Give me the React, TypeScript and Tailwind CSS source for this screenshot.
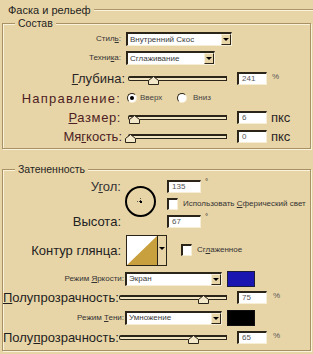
import React from 'react';

const U = ({ children }: { children: React.ReactNode }) => (
  <span className="underline underline-offset-[1px] decoration-[1px]">{children}</span>
);

function Field({ value, className = 'w-[30px]' }: { value: string; className?: string }) {
  return (
    <div
      className={`flex h-[13px] items-center border-t-2 border-l-2 border-b border-r border-t-[#2b2418] border-l-[#2b2418] border-b-[#f7eed6] border-r-[#f7eed6] bg-white pl-[3px] text-[8px] leading-none text-[#555] ${className}`}
    >
      {value}
    </div>
  );
}

function Arrow() {
  return <div className="h-0 w-0 border-x-[3px] border-t-[3px] border-x-transparent border-t-black" />;
}

function Select({ value, className }: { value: string; className: string }) {
  return (
    <div
      className={`flex h-[14px] items-center border-t-2 border-l-2 border-b border-r border-t-[#2b2418] border-l-[#2b2418] border-b-[#f7eed6] border-r-[#f7eed6] bg-white pl-[2px] ${className}`}
    >
      <span className="flex-1 text-[8px] leading-none text-[#3a3a3a]">{value}</span>
      <div className="flex h-[11px] w-[10px] items-center justify-center border border-t-[#f7eed6] border-l-[#f7eed6] border-b-[#2b2418] border-r-[#2b2418] bg-[#e8d5a7]">
        <Arrow />
      </div>
    </div>
  );
}

function Slider({ className, thumb }: { className: string; thumb: string }) {
  return (
    <div className={`relative h-[5px] ${className}`}>
      <div className="h-full rounded-l-[2px] border border-t-2 border-[#2b2418] bg-[#f1e4c2]" />
      <svg className={`absolute top-0 ${thumb}`} width="11" height="9" viewBox="0 0 11 9">
        <path d="M5.5 0.5 L10.5 4.5 V8.5 H0.5 V4.5 Z" fill="#f4e8ca" stroke="#2b2418" strokeWidth="1" />
      </svg>
    </div>
  );
}

function Radio({ on }: { on?: boolean }) {
  return (
    <div className="flex h-[10px] w-[10px] items-center justify-center rounded-full border border-t-[#2b2418] border-l-[#2b2418] border-b-[#f7eed6] border-r-[#f7eed6] bg-white">
      {on && <div className="h-[4px] w-[4px] rounded-full bg-black" />}
    </div>
  );
}

function Check() {
  return (
    <div className="h-[12px] w-[11px] border-t-2 border-l-2 border-b border-r border-t-[#2b2418] border-l-[#2b2418] border-b-[#f7eed6] border-r-[#f7eed6] bg-white" />
  );
}

const box =
  'ml-[2px] w-[309px] border border-[#a89167] shadow-[inset_1px_1px_0_#fbf2da,1px_1px_0_#fbf2da]';
const legend = 'ml-[12px] bg-[#e8d5a7] px-[3px] text-[10.5px] leading-[13px] text-[#1e1e1e]';
const big = 'text-right whitespace-nowrap text-[13px] leading-none';
const small = 'text-right whitespace-nowrap text-[8px] leading-none text-[#333]';

export default function App() {
  return (
    <div className="h-[354px] w-[313px] overflow-hidden bg-[#e8d5a7] font-['Liberation_Sans',Arial,sans-serif] text-[#222]">
      {/* заголовок */}
      <div className="flex h-[17px] items-center pl-[8px] pt-[3px]">
        <span className="text-[11px] leading-none text-[#1e1e1e]">Фаска и рельеф</span>
        <div className="ml-[3px] h-[2px] flex-1 border-t border-b border-t-[#ad976c] border-b-[#fbf2da]" />
      </div>

      {/* Состав */}
      <fieldset className={`${box} pb-[2px]`}>
        <legend className={legend}>Состав</legend>

        <div className="flex h-[18px] items-center">
          <div className={`w-[118px] ${small}`}>
            Стил<U>ь</U>:
          </div>
          <Select value="Внутренний Скос" className="ml-[5px] w-[106px]" />
        </div>

        <div className="flex h-[20px] items-center">
          <div className={`w-[118px] ${small}`}>
            Техни<U>к</U>а:
          </div>
          <Select value="Сглаживание" className="ml-[5px] w-[89px]" />
        </div>

        <div className="flex h-[20px] items-center">
          <div className={`w-[122px] ${big} text-[#2a2626]`}>
            <U>Г</U>лубина:
          </div>
          <Slider className="ml-[3px] w-[99px]" thumb="left-[20px]" />
          <Field value="241" className="ml-[10px] w-[30px]" />
          <span className="ml-[5px] self-start pt-[5px] text-[8px] leading-none text-[#555]">%</span>
        </div>

        <div className="flex h-[20px] items-center">
          <div className={`w-[118px] ${big} tracking-[1.2px] text-[#4d1e24]`}>Направление:</div>
          <div className="ml-[6px] flex w-[50px] items-center">
            <Radio on />
            <span className="ml-[3px] text-[8px] leading-none text-[#444]">Вверх</span>
          </div>
          <Radio />
          <span className="ml-[6px] text-[8px] leading-none text-[#444]">Вниз</span>
        </div>

        <div className="flex h-[19px] items-center">
          <div className={`w-[118px] ${big} tracking-[0.6px] text-[#4d1e24]`}>
            <U>Р</U>азмер:
          </div>
          <Slider className="ml-[7px] w-[99px]" thumb="left-[1px]" />
          <Field value="6" className="ml-[10px] w-[30px]" />
          <span className="ml-[4px] text-[13px] leading-none text-[#2a2626]">пкс</span>
        </div>

        <div className="flex h-[19px] items-center">
          <div className={`w-[119px] ${big} text-[#4d1e24]`}>
            Мя<U>г</U>кость:
          </div>
          <Slider className="ml-[6px] w-[99px]" thumb="left-[-3px]" />
          <Field value="0" className="ml-[10px] w-[30px]" />
          <span className="ml-[4px] text-[13px] leading-none text-[#2a2626]">пкс</span>
        </div>
      </fieldset>

      {/* Затененность */}
      <fieldset className={`${box} mt-[14px] pb-[3px]`}>
        <legend className={legend}>Затененность</legend>

        <div className="grid grid-cols-[118px_46px_1fr] grid-rows-[18px_17px_18px] pt-[1px]">
          <div className={`${big} self-center text-[12px] text-[#333]`}>
            У<U>г</U>ол:
          </div>
          <div className="row-span-3 ml-[4px] mt-[9px] flex h-[31px] w-[31px] items-center justify-center self-start rounded-full border-2 border-black">
            <svg width="7" height="7" viewBox="0 0 7 7">
              <rect x="3" y="0" width="1" height="1" fill="#555" />
              <rect x="0" y="3" width="1" height="1" fill="#555" />
              <rect x="3" y="2" width="1" height="1" fill="#333" />
              <rect x="2" y="3" width="1" height="1" fill="#333" />
              <rect x="3" y="3" width="2" height="2" fill="#000" />
            </svg>
          </div>
          <div className="flex items-center">
            <Field value="135" className="w-[34px]" />
            <span className="ml-[4px] self-start pt-[1px] text-[8px] leading-none">°</span>
          </div>

          <div className="col-start-3 flex items-center">
            <Check />
            <span className="ml-[5px] whitespace-nowrap text-[8px] leading-none text-[#333]">
              Использовать <U>С</U>ферический свет
            </span>
          </div>

          <div className={`${big} row-start-3 self-center text-[12px] text-[#222]`}>Высота:</div>
          <div className="col-start-3 row-start-3 flex items-center">
            <Field value="67" className="w-[34px]" />
            <span className="ml-[4px] self-start pt-[1px] text-[8px] leading-none">°</span>
          </div>
        </div>

        <div className="flex h-[40px] items-center">
          <div className={`w-[118px] ${big} text-[12px] text-[#222]`}>Контур глянца:</div>
          <div className="ml-[5px] flex h-[31px] w-[41px] border border-[#2b2418]">
            <svg width="30" height="29" viewBox="0 0 30 29" className="block">
              <rect width="30" height="29" fill="#fff" />
              <polygon points="0,29 30,0 30,29" fill="#c9a03e" />
            </svg>
            <div className="flex flex-1 items-start justify-center border-l border-[#2b2418] bg-[#e8d5a7] pt-[11px]">
              <Arrow />
            </div>
          </div>
          <div className="ml-[14px]">
            <Check />
          </div>
          <span className="ml-[5px] text-[8px] leading-none text-[#333]">
            Сг<U>л</U>аженное
          </span>
        </div>

        <div className="flex h-[17px] items-center">
          <div className={`w-[121px] ${small}`}>
            Режим <U>Я</U>ркости:
          </div>
          <Select value="Экран" className="ml-[1px] w-[97px]" />
          <div className="ml-[5px] h-[16px] w-[28px] border border-[#1b1b3a] bg-[#1a14b0]" />
        </div>

        <div className="flex h-[21px] items-center">
          <div className={`w-[114px] ${big} text-[12.5px] text-[#1e1e1e]`}>
            <U>П</U>олупрозрачность:
          </div>
          <Slider className="ml-[2px] w-[108px]" thumb="left-[79px]" />
          <Field value="75" className="ml-[10px] w-[30px]" />
          <span className="ml-[6px] self-start pt-[5px] text-[8px] leading-none text-[#555]">%</span>
        </div>

        <div className="flex h-[19px] items-center">
          <div className={`w-[121px] ${small}`}>
            Режим <U>Т</U>ени:
          </div>
          <Select value="Умножение" className="ml-[1px] w-[97px]" />
          <div className="ml-[5px] h-[16px] w-[28px] border border-[#111] bg-black" />
        </div>

        <div className="flex h-[20px] items-center">
          <div className={`w-[114px] ${big} text-[12.5px] text-[#1e1e1e]`}>
            Полу<U>п</U>розрачность:
          </div>
          <Slider className="ml-[2px] w-[108px]" thumb="left-[69px]" />
          <Field value="65" className="ml-[10px] w-[30px]" />
          <span className="ml-[6px] self-start pt-[5px] text-[8px] leading-none text-[#555]">%</span>
        </div>
      </fieldset>
    </div>
  );
}
